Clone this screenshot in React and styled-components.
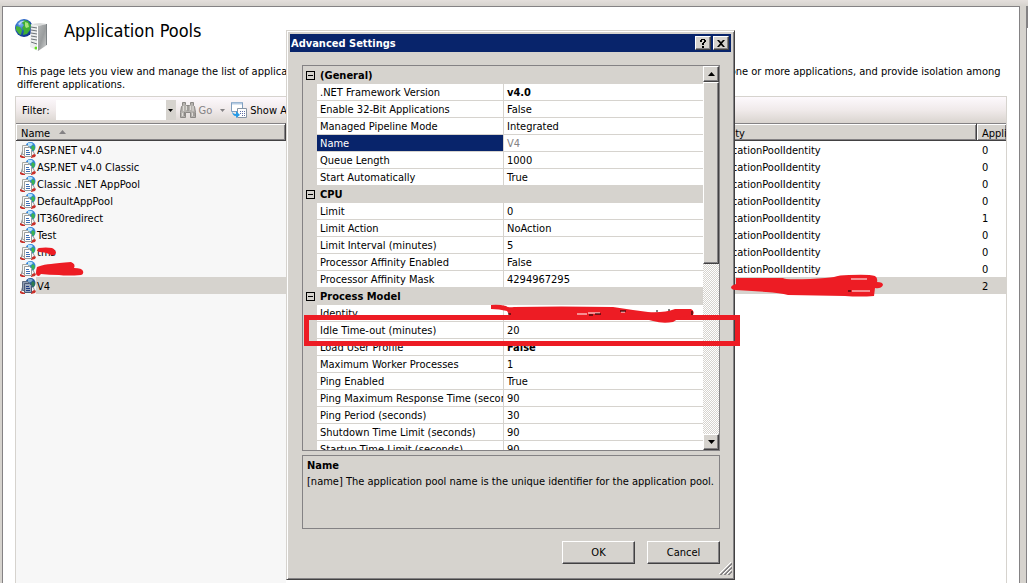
import React from "react";
import styled, { createGlobalStyle, css } from "styled-components";

const pools = [
  { name: "ASP.NET v4.0", identity: "ApplicationPoolIdentity", apps: 0 },
  { name: "ASP.NET v4.0 Classic", identity: "ApplicationPoolIdentity", apps: 0 },
  { name: "Classic .NET AppPool", identity: "ApplicationPoolIdentity", apps: 0 },
  { name: "DefaultAppPool", identity: "ApplicationPoolIdentity", apps: 0 },
  { name: "IT360redirect", identity: "ApplicationPoolIdentity", apps: 1 },
  { name: "Test", identity: "ApplicationPoolIdentity", apps: 0 },
  { name: "tms", identity: "ApplicationPoolIdentity", apps: 0 },
  { name: "", identity: "ApplicationPoolIdentity", apps: 0 },
  { name: "V4", identity: "", apps: 2, selected: true },
];

const sections = [
  {
    title: "(General)",
    rows: [
      { label: ".NET Framework Version", value: "v4.0", bold: true },
      { label: "Enable 32-Bit Applications", value: "False" },
      { label: "Managed Pipeline Mode", value: "Integrated" },
      { label: "Name", value: "V4", selected: true },
      { label: "Queue Length", value: "1000" },
      { label: "Start Automatically", value: "True" },
    ],
  },
  {
    title: "CPU",
    rows: [
      { label: "Limit", value: "0" },
      { label: "Limit Action", value: "NoAction" },
      { label: "Limit Interval (minutes)", value: "5" },
      { label: "Processor Affinity Enabled", value: "False" },
      { label: "Processor Affinity Mask", value: "4294967295" },
    ],
  },
  {
    title: "Process Model",
    rows: [
      { label: "Identity", value: "" },
      { label: "Idle Time-out (minutes)", value: "20" },
      { label: "Load User Profile", value: "False", bold: true },
      { label: "Maximum Worker Processes", value: "1" },
      { label: "Ping Enabled", value: "True" },
      { label: "Ping Maximum Response Time (seconds)", value: "90" },
      { label: "Ping Period (seconds)", value: "30" },
      { label: "Shutdown Time Limit (seconds)", value: "90" },
      { label: "Startup Time Limit (seconds)", value: "90" },
    ],
  },
];

const ServerIcon = () => (
  <svg width="34" height="34" viewBox="0 0 34 34" aria-hidden="true">
    <defs>
      <radialGradient id="globe" cx="35%" cy="30%" r="75%">
        <stop offset="0" stopColor="#7ab4ee" />
        <stop offset="0.45" stopColor="#2460c4" />
        <stop offset="1" stopColor="#0f2f86" />
      </radialGradient>
      <linearGradient id="side" x1="0" x2="1" y1="0" y2="1">
        <stop offset="0" stopColor="#b4b7b8" />
        <stop offset="0.5" stopColor="#9a9d9e" />
        <stop offset="1" stopColor="#d4d6d6" />
      </linearGradient>
    </defs>
    <circle cx="9" cy="9" r="9" fill="url(#globe)" />
    <path d="M9 1l4 1 3 4-1 5-3 4-4 1 1-4-2-3 2-3-2-2z" fill="#3fae35" />
    <path d="M1 7l4 1 2 3-1 5-2-1-3-4z" fill="#46b23a" />
    <path d="M10 3l3 1 1 4-3 1-1-2z" fill="#a9e37c" />
    <path d="M3 5q3-4 7-3-4 1-5 4z" fill="#d6ecff" opacity=".8" />
    <path d="M16 5l9-1 7 1-9 2z" fill="#d9dbdb" />
    <path d="M16 5l7 2v25l-8-4z" fill="#eceeee" />
    <path d="M23 7l9-2v21l-9 6z" fill="url(#side)" />
    <path
      d="M16 8l6 1M16 11l6 1M16 14l6 1M16 17l6 1M16 20l6 1M16 23l6 2"
      stroke="#6c7377"
    />
    <circle cx="21" cy="29" r="1.5" fill="#5fe01c" />
    <path d="M31.500 5v21" stroke="#7d8285" />
    <path d="M22.500 7v24" stroke="#fff" />
  </svg>
);

const PoolIcon = ({ selected }) => (
  <svg width="16" height="16" viewBox="0 0 16 16" aria-hidden="true">
    <circle cx="10.500" cy="5" r="5" fill={selected ? "#23589c" : "#2f82dc"} />
    <path d="M8 1q3-1 5 1l-2 2-3 1z" fill={selected ? "#7da7cc" : "#b5e2f6"} />
    <path d="M13 3l2 2-1 4-2-1-1-3z" fill={selected ? "#2f7a50" : "#3db34e"} />
    <path d="M2.500 9L1 14M13 9l2 4" fill="none" stroke="#8e9298" strokeWidth="1" />
    <path d="M0 13l5 2v1H2l-2-1zM11 14l3-2 2 1-1 2-4 1z" fill="#c92f28" />
    <path
      d="M2.500 3.500h5l2 2v7h-7z"
      fill={selected ? "#8f9db3" : "#f6f7f8"}
      stroke={selected ? "#5e6b80" : "#a9a9a2"}
    />
    <path
      d="M4.500 5.500h5l2 2v7h-7z"
      fill={selected ? "#9ca9bd" : "#fff"}
      stroke={selected ? "#4b5a74" : "#9a9d9b"}
    />
    <path d="M6 8.500h3M6 10.500h4M6 12.500h4" stroke={selected ? "#1e3c86" : "#3f70b4"} />
  </svg>
);

const BinocularsIcon = () => (
  <svg width="16" height="16" viewBox="0 0 16 16" aria-hidden="true">
    <path
      d="M2.500.500h3v2l1 1h3l1-1v-2h3v3l1 1 1 6v5h-5v-5h-5v5h-5v-5l1-6 1-1z"
      fill="#b5b2ae"
      stroke="#8b8885"
    />
    <path d="M3.500 4v5M6.500 4v4M10.500 4v4M13 4v5M2.500 11v3M12.500 11v3" stroke="#dedbd7" />
    <path d="M8 4v5M4.500 10v4M14 10v4" stroke="#8b8885" />
  </svg>
);

const ShowAllIcon = () => (
  <svg width="16" height="16" viewBox="0 0 16 16" aria-hidden="true">
    <path d="M.500.500h11v9H.500z" fill="#fff" stroke="#7f9fc0" />
    <path d="M1 1.500h10" stroke="#b5cbe3" strokeWidth="2" />
    <path d="M6.500 6.500h9v9h-9z" fill="#fff" stroke="#8794a4" />
    <path d="M9 9h1v1H9zM11 9h1v1h-1zM13 9h1v1h-1zM9 11h1v1H9zM11 11h1v1h-1zM13 11h1v1h-1zM11 13h1v1h-1zM13 13h1v1h-1z" fill="#5f6ea5" />
    <path d="M1 8q0 4 4 4v-3l4 4-4 3v-2Q1 14 1 8z" fill="#279be6" />
  </svg>
);

const Arrow = ({ up, color = "#000", small }) => (
  <svg width={small ? 5 : 7} height={small ? 3 : 4} viewBox="0 0 7 4" aria-hidden="true">
    <path d={up ? "M0 4h7L3.500 0z" : "M0 0h7L3.500 4z"} fill={color} />
  </svg>
);

const Marks = () => (
  <MarkLayer aria-hidden="true">
    <rect x="306.500" y="317.500" width="431" height="26" fill="none" strokeWidth="5" />
    <path d="M39 248q7-1 13 0 4 2 4 5-1 3-5 2-5-3-12-3-3-2 0-4z" stroke="none" />
    <path
      d="M37 267q8-3 14-3 7-1 20-2 5 2 3 6 8 0 9 3 1 3-2 4-14 1-22 0-10 0-18-1l-2 2q-3 0-3-3 0-3 1-6z"
      stroke="none"
    />
    <path
      d="M491 305q7-1 15 1 2 2 8 1 45-1 99 0l20 3 15 2q16 1 27-3h16q4 2 2 6l-12 2-8 5q-10 2-20-1l-12-3H511l-4-7q-8-2-16-2z"
      stroke="none"
    />
    <path
      d="M736 278q22 0 47 0 1 2 27 1 18-1 24-2 5-2 15-2 20-1 26 1 3 2 2 6 6 0 6 3-2 4-8 3l-1 8q-14 1-29 0l-57-1q-8-2-22-3l-30-2q-5 0-5-3 1-2 5-3z"
      stroke="none"
    />
    <path d="M577 314h10M588 313h12M621 312h4M851 279h16M852 291h18" stroke="#fff" />
    <path d="M508 314h3M589 315h4M595 314h6M620 311h6M657 310v2M669 309v2M692 311v4M848 291h3" stroke="#000" />
  </MarkLayer>
);

const App = () => {
  return (
    <Page>
      <GlobalStyle />
      <Workspace>
        <Panel>
          <Heading>
            <ServerIcon />
            <h1>Application Pools</h1>
          </Heading>
          <Intro>
            This page lets you view and manage the list of application pools on the server.
            Application pools are associated with worker processes, contain one or more
            applications, and provide isolation among different applications.
          </Intro>
          <ListArea>
            <Toolbar>
              <label htmlFor="filter">Filter:</label>
              <Combo>
                <input id="filter" type="text" />
                <button type="button" aria-label="Open filter list">
                  <Arrow small />
                </button>
              </Combo>
              <ToolButton type="button" disabled>
                <BinocularsIcon />
                Go
              </ToolButton>
              <ToolButton type="button" disabled aria-label="Go options">
                <Arrow small color="#848284" />
              </ToolButton>
              <ToolButton type="button">
                <ShowAllIcon />
                Show All
              </ToolButton>
            </Toolbar>
            <PoolTable>
              <colgroup>
                <col width="270" />
                <col />
                <col width="275" />
                <col width="29" />
              </colgroup>
              <thead>
                <tr>
                  <th>
                    Name <Arrow up color="#848284" />
                  </th>
                  <th />
                  <th>Identity</th>
                  <th>Applications</th>
                </tr>
              </thead>
              <tbody>
                {pools.map((pool, i) => (
                  <PoolRow key={i} $selected={pool.selected}>
                    <td>
                      <PoolName>
                        <PoolIcon selected={pool.selected} />
                        <span>{pool.name}</span>
                      </PoolName>
                    </td>
                    <td />
                    <td>{pool.identity}</td>
                    <td>{pool.apps}</td>
                  </PoolRow>
                ))}
              </tbody>
            </PoolTable>
          </ListArea>
        </Panel>
        <ActionsEdge />
      </Workspace>

      <Dialog role="dialog" aria-labelledby="dialog-title">
        <TitleBar>
          <h2 id="dialog-title">Advanced Settings</h2>
          <CaptionButton type="button" aria-label="Help">
            <svg width="8" height="9" viewBox="0 0 8 9" aria-hidden="true">
              <path d="M1 3V1h1V0h4v1h1v2H6v1H5v2H3V4h1V3h1V1H3v2zM3 7h2v2H3z" />
            </svg>
          </CaptionButton>
          <CaptionButton type="button" aria-label="Close">
            <svg width="8" height="7" viewBox="0 0 8 7" aria-hidden="true">
              <path d="M0 0h2l2 2 2-2h2L5 3.500 8 7H6L4 5 2 7H0l3-3.500z" />
            </svg>
          </CaptionButton>
        </TitleBar>
        <DialogBody>
          <PropertyBox>
            <PropertyTable>
              <colgroup>
                <col width="14" />
                <col width="187" />
                <col />
              </colgroup>
              {sections.map((section) => (
                <tbody key={section.title}>
                  <SectionRow>
                    <td>
                      <Toggle type="button" aria-label={"Collapse " + section.title} />
                    </td>
                    <th colSpan="2">{section.title}</th>
                  </SectionRow>
                  {section.rows.map((row) => (
                    <PropertyRow key={row.label} $selected={row.selected} $bold={row.bold}>
                      <td />
                      <th>{row.label}</th>
                      <td>{row.value}</td>
                    </PropertyRow>
                  ))}
                </tbody>
              ))}
            </PropertyTable>
            <ScrollBar>
              <ScrollButton type="button" aria-label="Scroll up">
                <Arrow up />
              </ScrollButton>
              <Thumb />
              <ScrollButton type="button" aria-label="Scroll down">
                <Arrow />
              </ScrollButton>
            </ScrollBar>
          </PropertyBox>
          <HelpBox>
            <h3>Name</h3>
            <p>[name] The application pool name is the unique identifier for the application pool.</p>
          </HelpBox>
          <Buttons>
            <PushButton type="button">OK</PushButton>
            <PushButton type="button">Cancel</PushButton>
          </Buttons>
        </DialogBody>
        <Grip width="13" height="13" viewBox="0 0 13 13" aria-hidden="true">
          <path d="M0 12L12 0M4 12l8-8M8 12l4-4" stroke="#fff" />
          <path d="M1 13L13 1M2 13L13 2M5 13l8-8M6 13l7-7M9 13l4-4M10 13l3-3" stroke="#848284" />
        </Grip>
      </Dialog>
      <Marks />
    </Page>
  );
};

export default App;

const GlobalStyle = createGlobalStyle`
  * {
    box-sizing: border-box;
  }
  body {
    margin: 0;
    overflow: hidden;
    background: #d6d3ce;
  }
  body, button, input {
    font-family: Tahoma, "DejaVu Sans Condensed", "DejaVu Sans", sans-serif;
    font-size: 11px;
    line-height: 13px;
    color: #000;
  }
  h1, h2, h3, p {
    margin: 0;
  }
  button {
    padding: 0;
    border: none;
    background: #d6d3ce;
  }
  svg {
    flex: none;
  }
`;

const raised = css`
  border: 1px solid;
  border-color: #fff #424142 #424142 #fff;
  box-shadow: inset -1px -1px #848284;
  background: #d6d3ce;
`;

const Page = styled.div`
  position: relative;
  display: flex;
  flex-direction: column;
  height: 100vh;
  padding: 6px 0 0 2px;
  background: linear-gradient(#e4dfdc, #d6d3ce 6px);
`;
const Workspace = styled.div`
  display: flex;
  flex: 1;
  min-height: 0;
  gap: 6px;
`;
const Panel = styled.main`
  display: flex;
  flex-direction: column;
  flex: 1;
  min-width: 0;
  padding: 12px 12px 0;
  border: 1px solid #848284;
  border-bottom: none;
  background: #fff;
`;
const ActionsEdge = styled.div`
  width: 2px;
  border-left: 1px solid #848284;
  border-top: 22px solid #848284;
  background: #fff;
`;
const Heading = styled.header`
  display: flex;
  gap: 15px;

  h1 {
    font-size: 18px;
    font-weight: 400;
    line-height: 24px;
  }
`;
const Intro = styled.p`
  padding: 12px 0 5px 2px;
`;
const ListArea = styled.section`
  flex: 1;
  min-height: 0;
  overflow: hidden;
  border: 1px solid #d6d3ce;
  border-bottom: none;
  background: linear-gradient(90deg, #f7f7f7 270px, #fff 270px);
`;
const Toolbar = styled.div`
  display: flex;
  align-items: center;
  height: 26px;
  padding-left: 6px;
  background: linear-gradient(#fdf9fd, #f0eaea 50%, #d9d4cf);
`;
const Combo = styled.div`
  display: flex;
  height: 20px;
  margin: 0 4px 0 6px;

  input {
    width: 110px;
    padding: 0 2px;
    border: none;
    outline: none;
    background: #fff;
  }
  button {
    display: flex;
    align-items: center;
    justify-content: center;
    width: 10px;
  }
`;
const ToolButton = styled.button`
  display: flex;
  align-items: center;
  gap: 3px;
  margin-right: 8px;
  background: none;

  &:disabled {
    color: #848284;
  }
  &:disabled + & {
    margin-right: 6px;
  }
`;
const PoolTable = styled.table`
  width: 100%;
  table-layout: fixed;
  border-collapse: separate;
  border-spacing: 0;

  th,
  td {
    overflow: hidden;
    white-space: nowrap;
    text-align: left;
  }
  th {
    height: 18px;
    padding: 2px 5px 0;
    border-top: 1px solid #848284;
    border-right: 1px solid #424142;
    border-bottom: 1px solid #424142;
    box-shadow: inset 1px 1px #fff, inset -1px -1px #848284;
    background: #d6d3ce;
    font-weight: 400;
  }
  th:last-child {
    border-right: none;
  }
  th svg {
    margin: 0 0 3px 6px;
  }
`;
const PoolRow = styled.tr`
  td {
    height: 17px;
    padding: 1px 5px 0;
    background: ${(props) => (props.$selected ? "#d6d3ce" : "transparent")};
  }
  td:first-child {
    padding: 0 0 0 4px;
    background: ${(props) =>
      props.$selected ? "linear-gradient(90deg, #f7f7f7 20px, #d6d3ce 20px)" : "#f7f7f7"};
  }
`;
const PoolName = styled.div`
  display: flex;
  align-items: center;
  gap: 1px;

  span {
    padding-top: 2px;
  }
`;

const Dialog = styled.section`
  position: absolute;
  top: 30px;
  left: 286px;
  display: flex;
  flex-direction: column;
  width: 449px;
  height: 550px;
  padding: 2px;
  border: 1px solid;
  border-color: #d6d3ce #424142 #424142 #d6d3ce;
  box-shadow: inset 1px 1px #fff, inset -1px -1px #848284;
  background: #d6d3ce;
`;
const TitleBar = styled.header`
  display: flex;
  align-items: center;
  gap: 2px;
  height: 18px;
  margin: 1px;
  padding: 0 2px 0 1px;
  background: #08246b;

  h2 {
    flex: 1;
    font-size: 11px;
    color: #fff;
  }
`;
const CaptionButton = styled.button`
  ${raised}
  display: flex;
  align-items: center;
  justify-content: center;
  width: 16px;
  height: 14px;
`;
const DialogBody = styled.div`
  display: flex;
  flex-direction: column;
  flex: 1;
  min-height: 0;
  gap: 4px;
  padding: 12px 12px 13px 13px;
`;
const PropertyBox = styled.div`
  display: flex;
  align-items: flex-start;
  flex: 1;
  min-height: 0;
  overflow: hidden;
  border: 1px solid #848284;
`;
const PropertyTable = styled.table`
  flex: 1;
  width: 100%;
  min-width: 0;
  table-layout: fixed;
  border-collapse: separate;
  border-spacing: 0;
  margin-top: 1px;

  th,
  td {
    height: 17px;
    padding: 0 0 0 3px;
    overflow: hidden;
    white-space: nowrap;
    text-align: left;
  }
`;
const SectionRow = styled.tr`
  td,
  th {
    font-weight: 700;
  }
`;
const PropertyRow = styled.tr`
  th {
    border-right: 1px solid #d6d3ce;
    border-bottom: 1px solid #d6d3ce;
    background: ${(props) => (props.$selected ? "#08246b" : "#fff")};
    color: ${(props) => (props.$selected ? "#fff" : "#000")};
    font-weight: 400;
  }
  td:last-child {
    border-bottom: 1px solid #d6d3ce;
    background: #fff;
    color: ${(props) => (props.$selected ? "#848284" : "#000")};
    font-weight: ${(props) => (props.$bold ? 700 : 400)};
  }
`;
const Toggle = styled.button`
  display: block;
  width: 9px;
  height: 9px;
  border: 1px solid #000;
  background: linear-gradient(#000, #000) center / 5px 1px no-repeat;
`;
const ScrollBar = styled.div`
  display: flex;
  flex: none;
  flex-direction: column;
  align-self: stretch;
  width: 16px;
  background: repeating-conic-gradient(#fff 0 25%, #d6d3ce 0 50%) 0 0 / 2px 2px;
`;
const ScrollButton = styled.button`
  ${raised}
  display: flex;
  align-items: center;
  justify-content: center;
  height: 16px;

  &:last-child {
    margin-top: auto;
  }
`;
const Thumb = styled.div`
  ${raised}
  height: 182px;
`;
const HelpBox = styled.div`
  height: 74px;
  padding: 3px 4px;
  border: 1px solid #848284;

  h3 {
    font-size: 11px;
  }
  p {
    padding-top: 3px;
  }
`;
const Buttons = styled.div`
  display: flex;
  justify-content: flex-end;
  gap: 12px;
  padding-top: 8px;
`;
const PushButton = styled.button`
  ${raised}
  width: 73px;
  height: 23px;
`;
const Grip = styled.svg`
  position: absolute;
  right: 2px;
  bottom: 4px;
`;
const MarkLayer = styled.svg`
  position: absolute;
  inset: 0;
  width: 100%;
  height: 100%;
  pointer-events: none;
  fill: #ed1c24;
  stroke: #ed1c24;
`;
